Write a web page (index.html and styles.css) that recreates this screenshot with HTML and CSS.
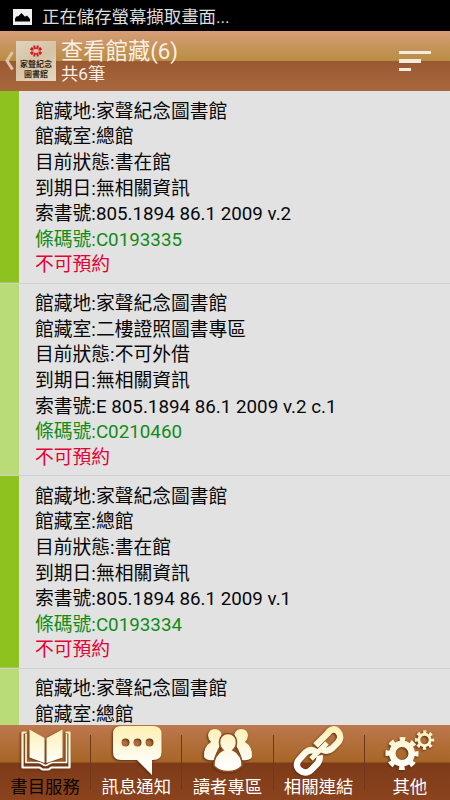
FILE: index.html
```html
<!DOCTYPE html>
<html lang="zh-Hant">
<head>
<meta charset="utf-8">
<title>查看館藏</title>
<link rel="stylesheet" href="styles.css">
</head>
<body>
<div class="screen">
  <div class="status">
    <svg width="20" height="18" viewBox="0 0 20 18"><path fill="#f0f0f0" fill-rule="evenodd" d="M0 1H19V17H0ZM2 13.500H17V11L14 7.500L12 8.800L8.500 5L5 8.500L4 8L2 10.500Z"/></svg>
    <span>正在儲存螢幕擷取畫面...</span>
  </div>
  <header class="bar">
    <svg class="back" width="9" height="20" viewBox="0 0 9 20"><path d="M7.500 1L2 9.800L7.500 18.500" fill="none" stroke="#dec2ab" stroke-width="3"/></svg>
    <div class="logo">
      <svg width="12" height="12" viewBox="0 0 12 12" fill="none" stroke="#d6141c" stroke-width="1.900"><path d="M4.300 .5V2L5.300 4M7.700 .5V2L6.700 4M4.300 11.500V10L5.300 8M7.700 11.500V10L6.700 8M.5 4.800L2.500 2.500M11.500 4.800L9.500 2.500M.5 7.200L2.500 9.500M11.500 7.200L9.500 9.500M1 4.500H3.500M11 4.500H8.500M1 7.500H3.500M11 7.500H8.500"/></svg>
      <span>家聲紀念</span>
      <span>圖書館</span>
    </div>
    <div class="heading"><h1>查看館藏(6)</h1><p>共6筆</p></div>
    <div class="sort"><i></i><i></i><i></i></div>
  </header>
  <main class="list">
    <section class="item">
      <p>館藏地:家聲紀念圖書館</p><p>館藏室:總館</p><p>目前狀態:書在館</p><p>到期日:無相關資訊</p><p>索書號:805.1894 86.1 2009 v.2</p><p class="code">條碼號:C0193335</p><p class="no">不可預約</p>
    </section>
    <section class="item alt">
      <p>館藏地:家聲紀念圖書館</p><p>館藏室:二樓證照圖書專區</p><p>目前狀態:不可外借</p><p>到期日:無相關資訊</p><p>索書號:E 805.1894 86.1 2009 v.2 c.1</p><p class="code">條碼號:C0210460</p><p class="no">不可預約</p>
    </section>
    <section class="item">
      <p>館藏地:家聲紀念圖書館</p><p>館藏室:總館</p><p>目前狀態:書在館</p><p>到期日:無相關資訊</p><p>索書號:805.1894 86.1 2009 v.1</p><p class="code">條碼號:C0193334</p><p class="no">不可預約</p>
    </section>
    <section class="item alt">
      <p>館藏地:家聲紀念圖書館</p><p>館藏室:總館</p>
    </section>
  </main>
  <nav class="tabs">
    <a class="tab active">
      <svg width="54" height="52" viewBox="0 0 54 52">
        <defs><linearGradient id="g" gradientUnits="userSpaceOnUse" x1="0" y1="2" x2="0" y2="46"><stop offset="0" stop-color="#fff0b4"/><stop offset=".75" stop-color="#fffdf5"/><stop offset="1" stop-color="#fff"/></linearGradient></defs>
        <path fill="none" stroke="url(#g)" stroke-width="2.200" stroke-linejoin="round" d="M7.500 7.500H3.500V42.500H20C22 42.500 22 44.500 24 44.500H29C31 44.500 31 42.500 33 42.500H50.500V7.500H46.500"/>
        <path fill="none" stroke="url(#g)" stroke-width="1.600" d="M7 9V37.500H19C23 37.500 24 40.500 26.500 40.500S30 37.500 34 37.500H47.500V9"/>
        <path fill="url(#g)" d="M10.500 4.500L25.500 13V38L10.500 32.500ZM43.500 4.500L27.500 13V38L43.500 32.500Z"/>
      </svg><span>書目服務</span>
    </a>
    <a class="tab">
      <svg width="54" height="52" viewBox="0 0 54 52"><path fill="url(#g)" fill-rule="evenodd" d="M11 1H43Q51.500 1 51.500 9V27Q51.500 35 43 35H42V50L27 35H11Q3 35 3 27V9Q3 1 11 1ZM11.500 17.500a4 4 0 1 0 8 0a4 4 0 1 0-8 0ZM23.500 17.500a4 4 0 1 0 8 0a4 4 0 1 0-8 0ZM35.500 17.500a4 4 0 1 0 8 0a4 4 0 1 0-8 0Z"/></svg><span>訊息通知</span>
    </a>
    <a class="tab">
      <svg width="54" height="52" viewBox="0 0 54 52">
        <g id="side" fill="url(#g)"><path d="M13.500 4C18 4 21 7 20.500 11Q20 14 18 16L21 19Q16 23 13 35Q6 36 3 32Q2 22 10 17Q7 14 7 10Q8 4 13.500 4Z"/></g>
        <use href="#side" transform="translate(54 0) scale(-1 1)"/>
        <path fill="url(#g)" stroke="#8e501f" stroke-width="1.600" d="M27 8.500C32 8.500 35.500 12 35.500 17Q35.500 22 32 25C39 28 41.500 35 41 41Q36 46.500 27 46.500T13 41C12.500 35 15 28 22 25Q18.500 22 18.500 17C18.500 12 22 8.500 27 8.500Z"/>
      </svg><span>讀者專區</span>
    </a>
    <a class="tab">
      <svg width="54" height="52" viewBox="0 0 54 52">
        <g fill="none" stroke="url(#g)">
          <path stroke-width="6.500" d="M23.500 20.500L32 12L35.500 8.500C38.500 4 43 3 46 6.500S49 14.500 45.500 18L40.500 23Q35.500 27.500 30 24.500"/>
          <path stroke-width="6.500" d="M24 27Q19 23 13.500 27.500L8 33.500C4 37.500 4 42 7.500 45S15.500 48.500 19 45L24.500 39.500Q28.500 35.500 27.500 30.500"/>
        </g>
        <path fill="none" stroke="#fff9df" stroke-width="5" d="M19 34L35 18"/>
      </svg><span>相關連結</span>
    </a>
    <a class="tab">
      <svg width="54" height="52" viewBox="0 0 54 52">
        <g fill="none" stroke="url(#g)">
          <circle cx="19" cy="28.500" r="9.700" stroke-width="6.500"/>
          <circle cx="19" cy="28.500" r="14.300" stroke-width="4.500" stroke-dasharray="5.600 5.630" stroke-dashoffset="2.800"/>
          <circle cx="41.500" cy="15" r="5.700" stroke-width="3"/>
          <circle cx="41.500" cy="15" r="8.200" stroke-width="3" stroke-dasharray="3.200 3.240" stroke-dashoffset="1.600"/>
        </g>
      </svg><span>其他</span>
    </a>
  </nav>
</div>
</body>
</html>
```

FILE: styles.css
```css
* { box-sizing: border-box; }
body { margin: 0; font-family: Roboto, "Noto Sans CJK TC", sans-serif; }
p, h1 { margin: 0; font-weight: 400; }
svg { display: block; flex: none; }
.screen { width: 450px; height: 800px; display: flex; flex-direction: column; overflow: hidden; background: #e2e2e2; }
.status { flex: none; height: 31px; background: #000; color: #ddd; display: flex; align-items: center; padding: 3px 0 0 13px; gap: 9px; font-size: 17.4px; line-height: 28px; white-space: nowrap; }
.bar { flex: none; height: 60px; display: flex; align-items: center; padding-left: 5px; color: #f8eee6; background: linear-gradient(#d79d78 0, #b88d42 30px, #9a5931 30px, #a9673d 60px); }
.back { margin-right: 2px; }
.logo { width: 40px; height: 40px; flex: none; background: linear-gradient(150deg, #e0d3be, #d5c3a5 45%, #e3d7c1); display: flex; flex-direction: column; align-items: center; padding-top: 4px; color: #352b22; font: 700 8px/9px "Noto Sans CJK TC", sans-serif; white-space: nowrap; }
.logo svg { margin-bottom: 2px; }
.logo span { line-height: 9.500px; }
.heading { margin-left: 5px; flex: 1; white-space: nowrap; }
.heading h1 { font-size: 22.300px; line-height: 26px; margin-top: 1px; }
.heading p { font-size: 17.300px; line-height: 21px; }
.sort { width: 51px; display: flex; flex-direction: column; gap: 5px; }
.sort i { height: 3.500px; width: 32px; background: #f5ebdf; }
.sort i:nth-child(2) { width: 22px; }
.sort i:nth-child(3) { width: 12px; }
.list { height: 634px; flex: none; overflow: hidden; background: #e2e2e2; color: #080808; font-size: 18.800px; }
.item { height: 192.500px; background: linear-gradient(#8dc21f, #8dc21f) left / 19px 100% no-repeat; border-bottom: 1px solid #cfcfcf; padding: 8.600px 0 0 35px; }
.item.alt { background-image: linear-gradient(#b9dc78, #b9dc78); }
.item p { height: 25.650px; line-height: 25.650px; white-space: nowrap; }
.item .code { color: #118c16; }
.item .no { color: #e60033; }
.tabs { flex: none; height: 75px; display: grid; grid-template-columns: repeat(5, 91.200px); background: linear-gradient(#bd774e 0, #a76626 37px, #7e3b19 38px, #8a431d 75px); }
.tab { display: flex; flex-direction: column; align-items: center; color: #fff; font-size: 17.400px; line-height: 22px; white-space: nowrap; background: linear-gradient(#70381b, #70381b) right 10px / 1px 55px no-repeat; }
.tab:last-child { background: none; }
.tab svg { margin-bottom: -1px; filter: drop-shadow(-1px 1px 1px #5c2d10); }
.tab span { margin-left: -1px; }
.active { color: #0d0502; }
```
